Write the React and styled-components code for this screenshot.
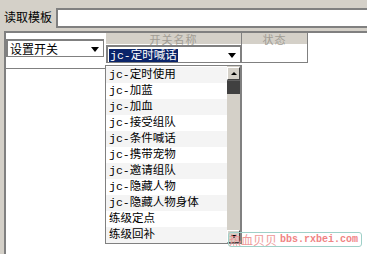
import React from 'react';
import styled, { createGlobalStyle } from 'styled-components';

const items = [
  'jc-定时使用',
  'jc-加蓝',
  'jc-加血',
  'jc-接受组队',
  'jc-条件喊话',
  'jc-携带宠物',
  'jc-邀请组队',
  'jc-隐藏人物',
  'jc-隐藏人物身体',
  '练级定点',
  '练级回补',
];

export default function App() {
  return (
    <>
      <GlobalStyle />
      <Window>
        <TopBar>
          <Label>{'读取模板'}</Label>
          <TemplateInput />
        </TopBar>
        <Panel>
          <LeftCol>
            <Combo $width={98}>
              <ComboText>{'设置开关'}</ComboText>
              <Arrow />
            </Combo>
          </LeftCol>
          <Column $width={135}>
            <HeaderCell>{'开关名称'}</HeaderCell>
            <Combo $width={135} $height={18}>
              <Selected>{'jc-定时喊话'}</Selected>
              <Arrow />
            </Combo>
          </Column>
          <Column $width={65}>
            <HeaderCell>{'状态'}</HeaderCell>
            <StatusCell />
          </Column>

          <DropList>
            <Items>
              {items.map((t, i) => (
                <Item key={t} $alt={i % 2 === 0}>{t}</Item>
              ))}
            </Items>
            <ScrollBar>
              <ScrollButton><UpTri /></ScrollButton>
              <Thumb />
              <Track />
              <ScrollButton><DownTri /></ScrollButton>
            </ScrollBar>
          </DropList>
        </Panel>

        <Watermark>
          <WmCn>{'热血贝贝'}</WmCn>
          <WmUrl>{'bbs.rxbei.com'}</WmUrl>
        </Watermark>
      </Window>
    </>
  );
}

const GlobalStyle = createGlobalStyle`
  html, body {
    margin: 0;
    padding: 0;
    background: #d4d0c8;
    overflow: hidden;
  }
  body {
    font-family: "Noto Sans CJK SC", sans-serif;
    font-size: 12px;
    color: #000;
  }
`;

const Window = styled.div`
  position: relative;
  width: 367px;
  height: 254px;
  display: flex;
  flex-direction: column;
  overflow: hidden;
`;

const TopBar = styled.div`
  height: 31px;
  display: flex;
  align-items: flex-start;
  padding-left: 4px;
  flex-shrink: 0;
`;

const Label = styled.span`
  margin-top: 9px;
  line-height: 16px;
  white-space: nowrap;
`;

const TemplateInput = styled.div`
  margin-top: 8px;
  margin-left: 4px;
  flex: 1;
  height: 16px;
  background: #fff;
  border: 2px solid #808080;
  border-right: none;
`;

const Panel = styled.div`
  position: relative;
  flex: 1;
  margin-left: 4px;
  background: #fff;
  border-top: 2px solid #808080;
  border-left: 2px solid #808080;
  display: flex;
  align-items: flex-start;
`;

const LeftCol = styled.div`
  width: 100px;
  height: 29px;
  padding-top: 6px;
  border-bottom: 1px solid #808080;
  flex-shrink: 0;
`;

const Column = styled.div`
  width: ${p => p.$width}px;
  flex-shrink: 0;
  display: flex;
  flex-direction: column;
  border-right: 1px solid #808080;
`;

const HeaderCell = styled.div`
  height: 12px;
  background: #d4d0c8;
  color: #a09c94;
  text-align: center;
  font-size: 11px;
  line-height: 12px;
  border-bottom: 1px solid #fff;
  box-sizing: border-box;
  letter-spacing: 1px;
`;

const Combo = styled.div`
  width: ${p => p.$width}px;
  height: ${p => p.$height || 18}px;
  box-sizing: border-box;
  background: #fff;
  border: 2px solid #808080;
  border-right-width: 1px;
  border-bottom-width: 1px;
  display: flex;
  align-items: center;
  padding: 0 4px 0 1px;
`;

const ComboText = styled.span`
  flex: 1;
  padding-left: 1px;
  line-height: 14px;
`;

const Selected = styled.span`
  background: #0a246a;
  color: #fff;
  padding: 0 1px;
  line-height: 13px;
  font-family: "Liberation Mono", "Noto Sans CJK SC", monospace;
  font-size: 11.5px;
  margin-right: auto;
  margin-top: 2px;
`;

const Arrow = styled.span`
  width: 0;
  height: 0;
  border-left: 4px solid transparent;
  border-right: 4px solid transparent;
  border-top: 5px solid #000;
  margin-top: 2px;
`;

const StatusCell = styled.div`
  height: 18px;
  border-bottom: 1px solid #808080;
  box-sizing: border-box;
`;

const DropList = styled.div`
  position: absolute;
  left: 99px;
  top: 32px;
  width: 137px;
  height: 179px;
  box-sizing: border-box;
  border: 1px solid #808080;
  border-right-width: 2px;
  background: #fff;
  display: flex;
`;

const Items = styled.div`
  flex: 1;
  padding-top: 1px;
  overflow: hidden;
`;

const Item = styled.div`
  height: 16px;
  line-height: 16px;
  padding-left: 3px;
  background: ${p => (p.$alt ? '#f4f4f4' : '#fff')};
  font-family: "Liberation Mono", "Noto Sans CJK SC", monospace;
  font-size: 11.5px;
  white-space: nowrap;
`;

const ScrollBar = styled.div`
  width: 13px;
  background: #d4d0c8;
  display: flex;
  flex-direction: column;
  padding-top: 1px;
`;

const ScrollButton = styled.div`
  height: 11px;
  background: #d4d0c8;
  border: 1px solid;
  border-color: #fff #404040 #404040 #fff;
  display: flex;
  align-items: center;
  justify-content: center;
`;

const UpTri = styled.span`
  width: 0;
  height: 0;
  border-left: 3px solid transparent;
  border-right: 3px solid transparent;
  border-bottom: 3px solid #000;
`;

const DownTri = styled(UpTri)`
  border-bottom: none;
  border-top: 3px solid #000;
`;

const Thumb = styled.div`
  height: 13px;
  background: #404040;
  border-top: 1px solid #606060;
`;

const Track = styled.div`
  flex: 1;
`;

const Watermark = styled.div`
  position: absolute;
  z-index: 2;
  right: 5px;
  bottom: 7px;
  width: 134px;
  height: 15px;
  box-sizing: border-box;
  border: 1px solid #9fd0c8;
  border-radius: 3px;
  display: flex;
  align-items: center;
  gap: 3px;
  white-space: nowrap;
`;

const WmCn = styled.span`
  color: #ee9a9a;
  font-size: 12px;
  line-height: 13px;
`;

const WmUrl = styled.span`
  color: #f08484;
  font-family: "Liberation Mono", monospace;
  font-size: 10px;
  font-weight: bold;
  line-height: 13px;
`;
